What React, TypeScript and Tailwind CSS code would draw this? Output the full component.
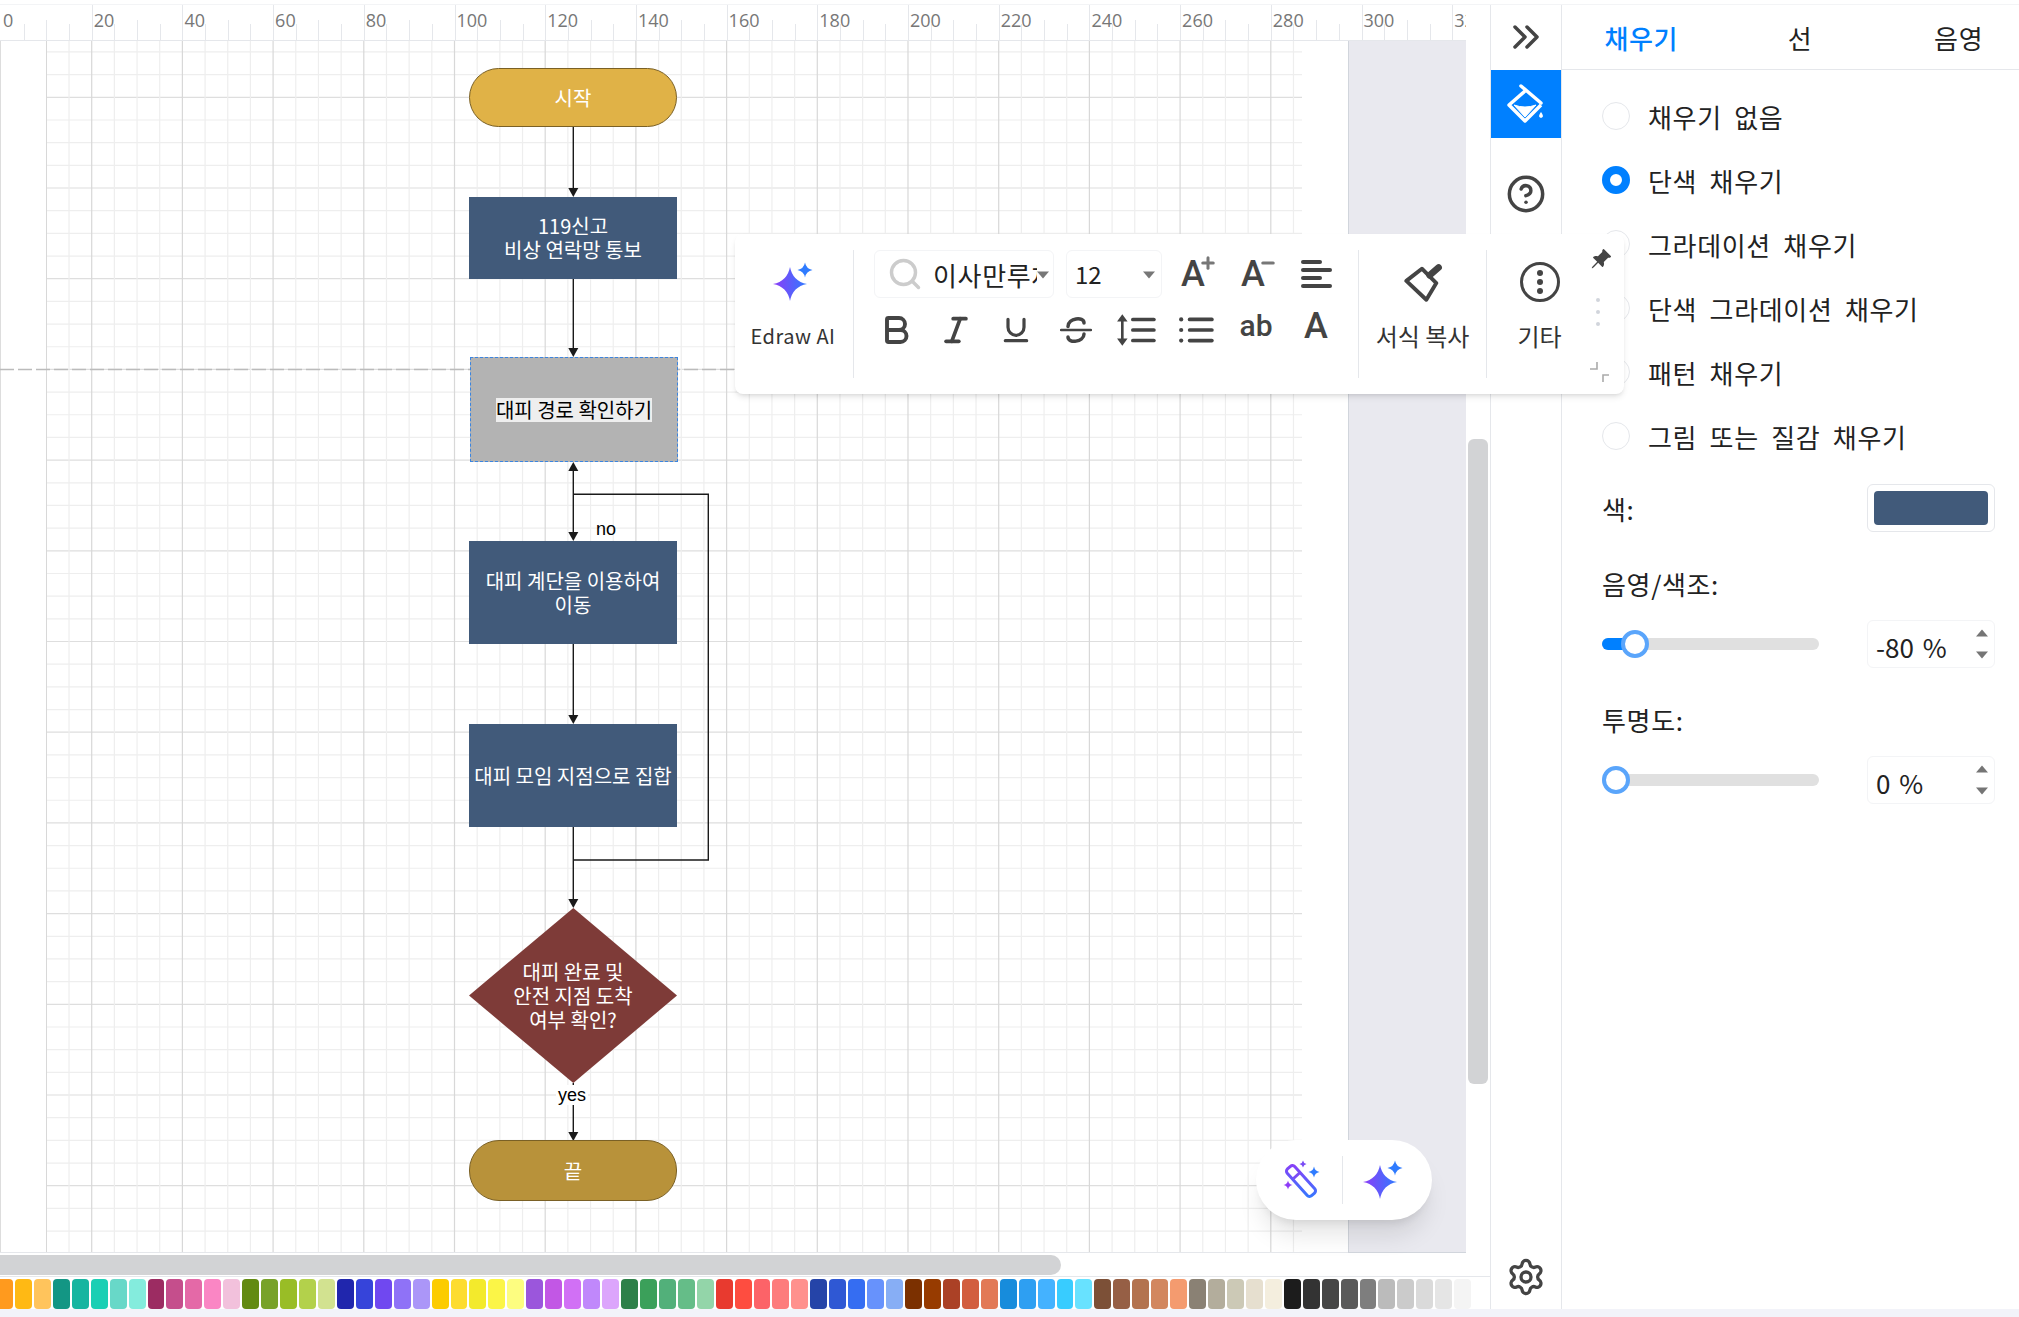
import React from 'react';
import { Bold, Italic, Underline, Search, CircleHelp, Settings, Plus, Minus } from 'lucide-react';
import { BsPinAngleFill } from 'react-icons/bs';

const UNIT = 90.7 / 20;
const CANVAS_TOP = 41;

const SWATCHES = [
  '#ff9a1e', '#ffb914', '#ffc45c', '#139684', '#16b5a0', '#1bcfb4', '#68d8c8', '#84ecdd',
  '#9c2c62', '#c54e8c', '#e469a7', '#fa86c4', '#f2c1dc', '#628a11', '#78a229', '#99bd26',
  '#b3d14b', '#d2e290', '#2026ad', '#3644da', '#7048f0', '#8f72f7', '#ab96f8', '#fccc00',
  '#fddc2f', '#f3ea2c', '#fbf547', '#fdfd80', '#9b56dc', '#c257e5', '#d170f5', '#c088fb',
  '#dca5fc', '#2e8049', '#3ba05a', '#52b07a', '#65bd88', '#93d5a9', '#e83a2f', '#fe4d40',
  '#fc6368', '#fd7c7c', '#ff918d', '#2544a8', '#2f58d4', '#356df2', '#6792fc', '#87aef5',
  '#7b3000', '#973b00', '#ab4126', '#d25e3f', '#e27956', '#178cdc', '#2e9ff2', '#44b2ff',
  '#38ccff', '#68e2ff', '#7c5037', '#965f45', '#b3734f', '#d2875f', '#f49b6f', '#8a8174',
  '#b3ad9c', '#ccc9b6', '#e6dfcf', '#f4eede', '#1c1c1c', '#333333', '#464646', '#5a5a5a',
  '#7e7e7e', '#bbbbbb', '#cbcbcb', '#dadada', '#e5e5e5', '#f4f4f4', '#ffffff',
];

const NODES = [
  { x: 469, y: 68, w: 208, h: 59, lines: ['시작'], cls: 'rounded-[30px] border border-[#7a6025] bg-[#e0b247] text-white' },
  { x: 469, y: 197, w: 208, h: 82, lines: ['119신고', '비상 연락망 통보'], cls: 'bg-[#415a7a] text-white' },
  { x: 469, y: 541, w: 208, h: 103, lines: ['대피 계단을 이용하여', '이동'], cls: 'bg-[#415a7a] text-white' },
  { x: 469, y: 724, w: 208, h: 103, lines: ['대피 모임 지점으로 집합'], cls: 'bg-[#415a7a] text-white' },
  { x: 469, y: 908, w: 208, h: 175, lines: ['대피 완료 및', '안전 지점 도착', '여부 확인?'], cls: 'text-white' },
  { x: 469, y: 1140, w: 208, h: 61, lines: ['끝'], cls: 'rounded-[30px] border border-[#7a6025] bg-[#b8923a] text-white' },
];

const ARROW_TIPS: [number, 'up' | 'down'][] = [
  [197, 'down'], [357, 'down'], [462, 'up'], [541, 'down'], [724, 'down'], [908, 'down'], [1141, 'down'],
];

const star = (cx: number, cy: number, r: number) => {
  const k = r * 0.16;
  return `M${cx} ${cy - r}Q${cx + k} ${cy - k} ${cx + r} ${cy}Q${cx + k} ${cy + k} ${cx} ${cy + r}Q${cx - k} ${cy + k} ${cx - r} ${cy}Q${cx - k} ${cy - k} ${cx} ${cy - r}Z`;
};

const Sparkle = ({ id, className }: { id: string; className?: string }) => (
  <svg viewBox="0 0 40 40" className={className}>
    <defs>
      <linearGradient id={id} x1="0" y1="0.5" x2="1" y2="0.5">
        <stop offset="0" stopColor="#8e3cf7" />
        <stop offset="1" stopColor="#2f7bff" />
      </linearGradient>
    </defs>
    <path d={star(17, 22, 17)} fill={`url(#${id})`} />
    <path d={star(32, 8, 7.5)} fill="#2f7bff" />
  </svg>
);

const Wand = ({ className }: { className?: string }) => (
  <svg viewBox="0 0 40 40" className={className}>
    <defs>
      <linearGradient id="wand" gradientUnits="userSpaceOnUse" x1="8" y1="8" x2="32" y2="34">
        <stop offset="0" stopColor="#8e3cf7" />
        <stop offset="1" stopColor="#2f7bff" />
      </linearGradient>
    </defs>
    <rect x="2" y="16" width="36" height="10" rx="3" transform="rotate(48 20 21)" fill="none" stroke="url(#wand)" strokeWidth="3" />
    <path d="M12.5 18.5L19 12.5" stroke="#7a4cf5" strokeWidth="3" />
    <path d={star(22, 4, 3.5)} fill="#7a4cf5" />
    <path d={star(33, 12, 5.5)} fill="#2f7bff" />
    <path d={star(7, 25, 4.5)} fill="#8e3cf7" />
  </svg>
);

const Bucket = ({ className }: { className?: string }) => (
  <svg viewBox="0 0 40 40" className={className}>
    <path d="M15 2L35 19" fill="none" stroke="#fff" strokeWidth="3.5" strokeLinecap="round" />
    <path d="M19 7L3 21L19 37L35 21" fill="none" stroke="#fff" strokeWidth="3.5" strokeLinejoin="round" />
    <path d="M8 21Q19 25 30 21L19 33Z" fill="#fff" stroke="#fff" strokeLinejoin="round" />
    <path d="M35 28C37 31 38 33 35 34C32 33 33 31 35 28Z" fill="#fff" />
  </svg>
);

const Caret = ({ up, className }: { up?: boolean; className?: string }) => (
  <svg viewBox="0 0 12 7" className={className}>
    <path d={up ? 'M0 7L6 0L12 7Z' : 'M0 0L12 0L6 7Z'} fill="currentColor" />
  </svg>
);

const ToolIcon = ({ children }: { children: React.ReactNode }) => (
  <div className="flex h-12 items-center justify-center text-[#444]">{children}</div>
);

const Ruler = () => {
  const ticks: number[] = [];
  for (let v = 5; v <= 320; v += 5) ticks.push(v);
  const labels: number[] = [];
  for (let v = 0; v <= 320; v += 20) labels.push(v);
  return (
    <div className="relative h-9 shrink-0 overflow-hidden border-b border-gray-200 bg-white font-['Open_Sans',sans-serif] text-lg leading-none text-[#777]">
      {ticks.map(v => (
        <div
          key={v}
          className={`absolute bottom-0 w-px bg-gray-200 ${v % 20 === 0 ? 'h-9' : v % 10 === 0 ? 'h-5' : 'h-4'}`}
          style={{ left: 1 + v * UNIT }}
        />
      ))}
      {labels.map(v => (
        <span key={v} className="absolute top-1.5 pl-0.5" style={{ left: 1 + v * UNIT }}>{v}</span>
      ))}
    </div>
  );
};

const Diagram = () => {
  const xs: number[] = [];
  for (let i = 3; i <= 57; i++) xs.push(i);
  const ys: number[] = [];
  for (let i = -2; i <= 51; i++) ys.push(i);
  const cx = 573.3;
  return (
    <svg width="1347" height="1212" viewBox="0 41 1347 1212" className="absolute left-0 top-0">
      <line x1="0.5" x2="0.5" y1="41" y2="1253" stroke="#ddd" />
      {ys.map(i => {
        const y = 97.3 + i * 22.675;
        return <line key={i} x1="46" x2="1302" y1={y} y2={y} stroke={i % 4 === 0 ? '#dedede' : '#eeeeee'} strokeWidth="1.2" />;
      })}
      {xs.map(i => {
        const x = 1 + i * 22.675;
        return <line key={i} x1={x} x2={x} y1="41" y2="1253" stroke={i % 4 === 0 ? '#d8d8d8' : '#eeeeee'} strokeWidth="1.2" />;
      })}
      <line x1="46.5" x2="46.5" y1="41" y2="1253" stroke="#d8d8d8" />
      <line x1="0" x2="1000" y1="369.5" y2="369.5" stroke="#bbb" strokeWidth="1.3" strokeDasharray="14 4" />
      <path d="M573.3 908L677 995.5L573.3 1083L469 995.5Z" fill="#7e3b38" />
      <path
        d={`M${cx} 127V190M${cx} 279V350M${cx} 470V534M${cx} 494.3H708.3V860H${cx}M${cx} 644V716M${cx} 827V900M${cx} 1083V1134`}
        fill="none"
        stroke="#1a1a1a"
        strokeWidth="1.4"
      />
      {ARROW_TIPS.map(([tip, dir]) => (
        <path
          key={tip}
          d={dir === 'down' ? `M${cx} ${tip}L${cx - 5} ${tip - 9}H${cx + 5}Z` : `M${cx} ${tip}L${cx - 5} ${tip + 9}H${cx + 5}Z`}
          fill="#1a1a1a"
        />
      ))}
    </svg>
  );
};

const Canvas = () => (
  <div className="relative flex-1 overflow-hidden border-b border-gray-200 bg-white">
    <Diagram />
    {NODES.map(n => (
      <div
        key={n.y}
        className={`absolute flex flex-col items-center justify-center text-center text-xl leading-6 ${n.cls}`}
        style={{ left: n.x, top: n.y - CANVAS_TOP, width: n.w, height: n.h }}
      >
        {n.lines.map(l => <span key={l}>{l}</span>)}
      </div>
    ))}
    <div
      className="absolute flex items-center justify-center border border-dashed border-[#3b85e0] bg-[#b3b3b3] text-xl"
      style={{ left: 470, top: 357 - CANVAS_TOP, width: 208, height: 105 }}
    >
      <span className="bg-[#eeeeee] leading-6 text-black">대피 경로 확인하기</span>
    </div>
    <span className="absolute font-['Liberation_Sans',sans-serif] text-lg leading-none text-black" style={{ left: 596, top: 520 - CANVAS_TOP }}>no</span>
    <span className="absolute bg-white px-0.5 font-['Liberation_Sans',sans-serif] text-lg leading-5 text-black" style={{ left: 556, top: 1085 - CANVAS_TOP }}>yes</span>
  </div>
);

const FloatingPill = () => (
  <div className="absolute left-[1256px] top-[1140px] flex h-20 w-44 items-center rounded-full bg-white shadow-xl">
    <div className="flex flex-1 items-center justify-center border-r border-gray-200 py-1 pl-1">
      <Wand className="h-10 w-10" />
    </div>
    <div className="flex flex-1 items-center justify-center py-1 pr-2">
      <Sparkle id="pill-star" className="h-10 w-10" />
    </div>
  </div>
);

const Toolbar = () => (
  <div className="absolute left-[735px] top-[234px] flex h-40 w-[889px] rounded-lg bg-white py-4 text-[#333] shadow-md">
    <div className="ml-0.5 mr-1 flex w-28 flex-col items-center pt-3">
      <Sparkle id="bar-star" className="h-10 w-10" />
      <span className="mt-5 text-xl leading-7 tracking-wide">Edraw AI</span>
    </div>
    <div className="border-l border-gray-200 px-3">
      <div className="grid w-120 grid-cols-8 gap-y-2">
        <div className="col-span-5 flex h-12 gap-3 pl-2 pr-1">
          <div className="relative flex min-w-0 flex-1 items-center gap-2.5 overflow-hidden rounded-md border border-gray-100 pl-3 pr-4">
            <Search size={36} strokeWidth={2.3} className="shrink-0 text-[#ccc]" />
            <span className="overflow-hidden whitespace-nowrap text-[26px] tracking-wide text-[#222]">이사만루체</span>
            <Caret className="absolute right-1 top-5 h-2 w-3 text-[#777]" />
          </div>
          <div className="relative flex w-24 items-center rounded-md border border-gray-100 pl-2 text-2xl text-[#222]">
            12
            <Caret className="absolute right-1.5 top-5 h-2 w-3 text-[#777]" />
          </div>
        </div>
        <ToolIcon>
          <span className="relative -ml-1.5 font-['Roboto',sans-serif] text-4xl font-medium leading-none">
            A
            <Plus size={18} strokeWidth={4} className="absolute -right-3 -top-0.5 text-[#777]" />
          </span>
        </ToolIcon>
        <ToolIcon>
          <span className="relative -ml-1.5 font-['Roboto',sans-serif] text-4xl font-medium leading-none">
            A
            <Minus size={18} strokeWidth={4} className="absolute -right-3 -top-0.5 text-[#777]" />
          </span>
        </ToolIcon>
        <ToolIcon>
          <svg viewBox="0 0 32 30" className="h-8 w-8">
            {[[3, 20], [11, 30], [19, 20], [27, 30]].map(([y, end]) => (
              <line key={y} x1="3" x2={end} y1={y} y2={y} stroke="#444" strokeWidth="4" strokeLinecap="round" />
            ))}
          </svg>
        </ToolIcon>
        <ToolIcon><Bold size={36} strokeWidth={2.6} /></ToolIcon>
        <ToolIcon><Italic size={34} strokeWidth={2.6} /></ToolIcon>
        <ToolIcon><Underline size={32} strokeWidth={2.4} /></ToolIcon>
        <ToolIcon>
          <svg viewBox="0 0 32 30" className="h-8 w-8">
            <path d="M1 15H31" stroke="#444" strokeWidth="2.5" strokeLinecap="round" />
            <path d="M8 11.5C8 3 24 1 24 8M24 19C24 27 8 29 8 22" fill="none" stroke="#444" strokeWidth="3.5" strokeLinecap="round" />
          </svg>
        </ToolIcon>
        <ToolIcon>
          <svg viewBox="0 0 38 30" className="h-8 w-10">
            <path d="M6 5V25" stroke="#444" strokeWidth="2.5" />
            <path d="M6 0L1 7H11ZM6 30L1 23H11Z" fill="#444" />
            {[5, 15, 25].map(y => (
              <line key={y} x1="16" x2="36" y1={y} y2={y} stroke="#444" strokeWidth="3.5" strokeLinecap="round" />
            ))}
          </svg>
        </ToolIcon>
        <ToolIcon>
          <svg viewBox="0 0 34 26" className="h-7 w-9">
            {[3, 13, 23].map(y => (
              <g key={y}>
                <circle cx="3" cy={y} r="2" fill="#444" />
                <line x1="11" x2="32" y1={y} y2={y} stroke="#444" strokeWidth="3.5" strokeLinecap="round" />
              </g>
            ))}
          </svg>
        </ToolIcon>
        <ToolIcon>
          <span className="-mt-2 font-['Roboto',sans-serif] text-3xl font-medium leading-none">ab</span>
        </ToolIcon>
        <ToolIcon>
          <span className="-mt-2 font-['Roboto',sans-serif] text-4xl font-medium leading-none">A</span>
        </ToolIcon>
      </div>
    </div>
    <div className="flex w-32 flex-col items-center border-l border-gray-200 pt-3">
      <svg viewBox="0 0 36 36" className="h-10 w-10">
        <path d="M3 17L17 6L30 19L21 34Z" fill="none" stroke="#444" strokeWidth="3.5" strokeLinejoin="round" />
        <path d="M24 12L32 5" stroke="#444" strokeWidth="6" strokeLinecap="round" />
      </svg>
      <span className="mt-5 whitespace-nowrap text-2xl leading-7">서식 복사</span>
    </div>
    <div className="flex flex-1 flex-col items-center border-l border-gray-200 pr-8 pt-3">
      <svg viewBox="0 0 40 40" className="h-10 w-10">
        <circle cx="20" cy="20" r="18.5" fill="none" stroke="#444" strokeWidth="3" />
        {[11, 20, 29].map(y => <circle key={y} cx="20" cy={y} r="3" fill="#444" />)}
      </svg>
      <span className="mt-5 text-2xl leading-7">기타</span>
    </div>
    <BsPinAngleFill size={22} className="absolute right-3 top-3.5 text-[#444]" />
    <div className="absolute right-6 top-16 flex flex-col gap-2">
      <span className="h-1 w-1 rounded-full bg-gray-300" />
      <span className="h-1 w-1 rounded-full bg-gray-300" />
      <span className="h-1 w-1 rounded-full bg-gray-300" />
    </div>
    <svg viewBox="0 0 20 20" className="absolute bottom-3 right-3.5 h-5 w-5">
      <path d="M0 7H7V0M19 13H13V20" fill="none" stroke="#aaa" strokeWidth="1.6" />
    </svg>
  </div>
);

const Slider = ({ value, pos, fill }: { value: string; pos: number; fill: number }) => (
  <div className="mt-5 flex h-12 items-center gap-12">
    <div className="relative h-3 flex-1 rounded-full bg-[#e0e0e0]">
      {fill > 0 && <div className="h-3 rounded-l-full bg-[#0080ff]" style={{ width: fill }} />}
      <div className="absolute -top-2 h-7 w-7 rounded-full border-4 border-[#5aa5fb] bg-white" style={{ left: pos }} />
    </div>
    <div className="relative flex h-12 w-32 items-center rounded-md border border-gray-100 pl-2 pt-1 tracking-normal text-[#222] [word-spacing:3px]">
      {value}
      <Caret up className="absolute right-1.5 top-2 h-2 w-3 text-[#757575]" />
      <Caret className="absolute bottom-2 right-1.5 h-2 w-3 text-[#757575]" />
    </div>
  </div>
);

const FILLS = ['채우기 없음', '단색 채우기', '그라데이션 채우기', '단색 그라데이션 채우기', '패턴 채우기', '그림 또는 질감 채우기'];

const Panel = () => (
  <div className="w-[457px] shrink-0 overflow-hidden bg-white text-[26px] tracking-wide text-[#222] [word-spacing:6px]">
    <div className="box-content h-16 border-b border-gray-200">
      <div className="grid h-full w-[476px] grid-cols-3 items-center text-center">
        <span className="font-medium text-[#0080ff]">채우기</span>
        <span>선</span>
        <span>음영</span>
      </div>
    </div>
    <div className="pl-10 pr-6 pt-3.5">
      {FILLS.map((f, i) => (
        <div key={f} className="flex h-16 items-center gap-5">
          {i === 1 ? (
            <span className="h-7 w-7 shrink-0 rounded-full border-8 border-[#0080ff] bg-white" />
          ) : (
            <span className="h-7 w-7 shrink-0 rounded-full border border-gray-200 bg-white" />
          )}
          <span className="-ml-0.5">{f}</span>
        </div>
      ))}
      <div className="mt-4 flex h-12 items-center justify-between">
        <span>색:</span>
        <div className="flex h-12 w-32 rounded-md border border-gray-200 p-1.5">
          <div className="flex-1 rounded bg-[#415a7a]" />
        </div>
      </div>
      <div className="mt-9 leading-8">음영/색조:</div>
      <Slider value="-80 %" pos={19} fill={34} />
      <div className="mt-9 leading-8">투명도:</div>
      <Slider value="0 %" pos={0} fill={0} />
    </div>
  </div>
);

const Sidebar = () => (
  <div className="flex w-18 shrink-0 flex-col items-center border-x border-gray-200 bg-white">
    <div className="box-content flex h-16 w-full items-center justify-center pb-px">
      <svg viewBox="0 0 26 24" className="h-6 w-7">
        <path d="M2 2L12 12L2 22M14 2L24 12L14 22" fill="none" stroke="#444" strokeWidth="3.5" strokeLinecap="round" strokeLinejoin="round" />
      </svg>
    </div>
    <div className="flex h-17 w-full items-center justify-center bg-[#0080ff]">
      <Bucket className="h-10 w-10" />
    </div>
    <CircleHelp size={40} strokeWidth={2.1} className="mt-9 text-[#444]" />
    <Settings size={40} strokeWidth={2} className="mb-3 mt-auto text-[#444]" />
  </div>
);

export default function App() {
  return (
    <div className="relative flex h-screen flex-col overflow-hidden bg-white font-['Noto_Sans_CJK_KR','Noto_Sans',sans-serif]">
      <div className="flex min-h-0 flex-1 flex-col pt-1">
        <div className="flex min-h-0 flex-1 border-t border-gray-100">
          <div className="flex min-w-0 flex-1 flex-col">
            <div className="flex min-h-0 flex-1">
              <div className="flex min-w-0 flex-1 flex-col">
                <Ruler />
                <div className="flex min-h-0 flex-1">
                  <Canvas />
                  <div className="w-[118px] shrink-0 border-b border-l border-gray-300 bg-[#e9e9ef]" />
                </div>
              </div>
              <div className="w-6 shrink-0 pl-0.5">
                <div className="mt-[434px] h-[645px] w-5 rounded-md bg-[#d2d3d5]" />
              </div>
            </div>
            <div className="h-6 shrink-0 border-b border-gray-200 py-0.5">
              <div className="h-5 w-[1061px] rounded-r-xl bg-[#d2d3d5]" />
            </div>
            <div className="-ml-1 flex h-8 shrink-0 gap-0.5 overflow-hidden pt-0.5">
              {SWATCHES.map((c, i) => (
                <div key={i} className="flex-1 rounded-sm" style={{ background: c }} />
              ))}
            </div>
          </div>
          <Sidebar />
          <Panel />
        </div>
      </div>
      <div className="h-2 shrink-0 bg-[#f2f3f9]" />
      <Toolbar />
      <FloatingPill />
    </div>
  );
}
